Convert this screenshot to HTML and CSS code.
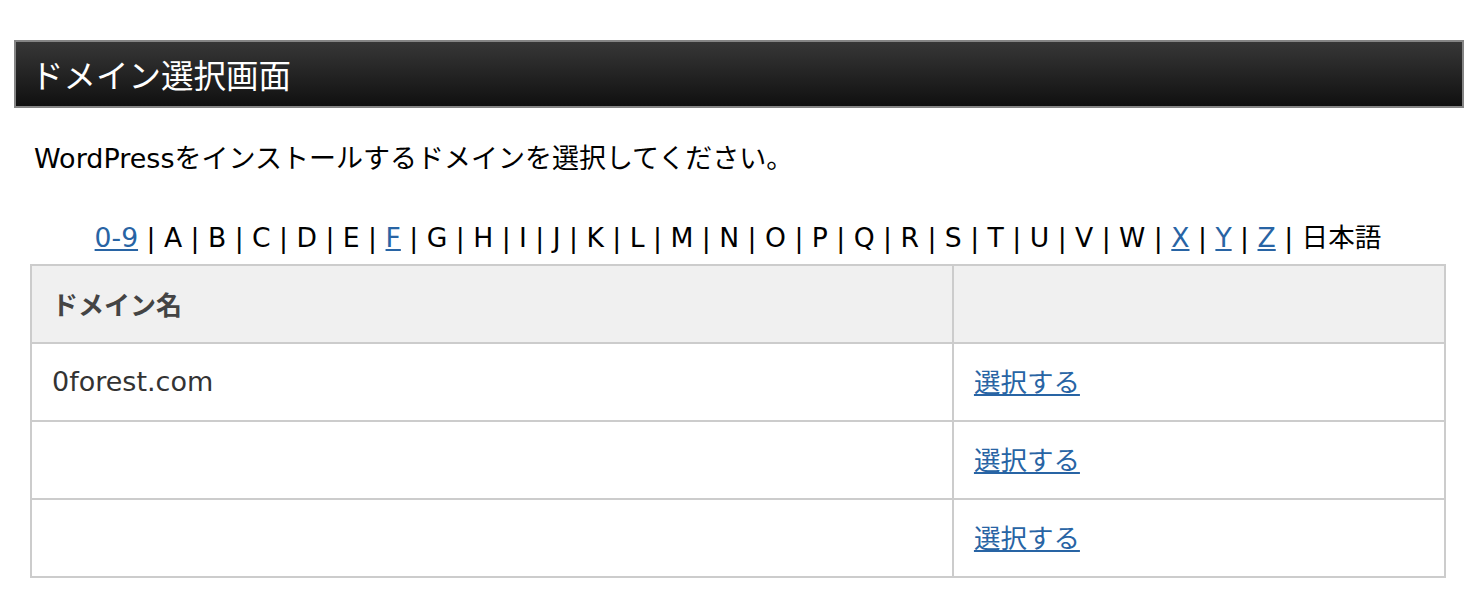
FILE: index.html
```html
<!DOCTYPE html>
<html lang="ja">
<head>
<meta charset="utf-8">
<title>ドメイン選択画面</title>
<link rel="stylesheet" href="styles.css">
</head>
<body>
<div class="page">
  <h2 class="title">ドメイン選択画面</h2>
  <div class="content">
    <p class="lead">WordPressをインストールするドメインを選択してください。</p>
    <p class="nav"><a href="#">0-9</a> | A | B | C | D | E | <a href="#">F</a> | G | H | I | J | K | L | M | N | O | P | Q | R | S | T | U | V | W | <a href="#">X</a> | <a href="#">Y</a> | <a href="#">Z</a> | 日本語</p>
    <table class="domains">
      <thead>
        <tr><th class="col-name">ドメイン名</th><th class="col-act"></th></tr>
      </thead>
      <tbody>
        <tr><td>0forest.com</td><td><a href="#">選択する</a></td></tr>
        <tr><td></td><td><a href="#">選択する</a></td></tr>
        <tr><td></td><td><a href="#">選択する</a></td></tr>
      </tbody>
    </table>
  </div>
</div>
</body>
</html>
```

FILE: styles.css
```css
html, body {
  margin: 0;
  padding: 0;
  background: #fff;
}
body {
  font-family: "DejaVu Sans", "Noto Sans CJK JP", sans-serif;
  color: #000;
}
.page {
  padding: 40px 19px 0 14px;
}
.title {
  margin: 0;
  height: 64px;
  box-sizing: content-box;
  border: 2px solid #858585;
  background: linear-gradient(#373737, #101010);
  color: #fff;
  font-weight: normal;
  font-size: 32.5px;
  line-height: 64px;
  padding-left: 15px;
  font-family: "Noto Sans CJK JP", sans-serif;
}
.content {
  padding: 0 18px 0 16px;
}
.lead {
  margin: 0;
  padding: 34px 0 0 4px;
  height: 48px;
  font-size: 27px;
  line-height: 34px;
}
.nav {
  margin: 0;
  padding-top: 31px;
  height: 43px;
  text-align: center;
  font-size: 26.6px;
  line-height: 34px;
}
a {
  color: #2864a4;
  text-decoration: underline;
}
.domains {
  width: 100%;
  border-collapse: collapse;
  border: 2px solid #cccccc;
  font-size: 27px;
  color: #333;
}
.domains th,
.domains td {
  border: 2px solid #cccccc;
  height: 76px;
  padding: 0 20px;
  text-align: left;
  vertical-align: middle;
  line-height: 34px;
}
.domains th {
  background: #f0f0f0;
  font-weight: bold;
  font-family: "Noto Sans CJK JP", sans-serif;
  font-size: 26px;
  color: #444;
}
.domains .col-name {
  width: 65.2%;
}
.domains td a {
  font-family: "Noto Sans CJK JP", sans-serif;
  font-size: 26.5px;
  line-height: 34px;
}
```
